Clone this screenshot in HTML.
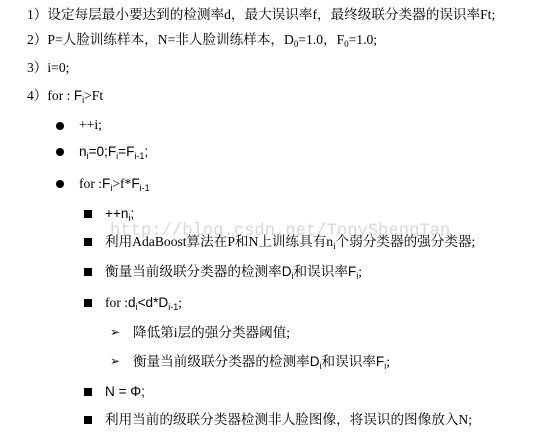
<!DOCTYPE html>
<html><head><meta charset="utf-8"><style>
body{margin:0;width:537px;height:438px;background:#fff;position:relative;overflow:hidden;font-family:"Liberation Serif","Noto Serif CJK SC",serif;font-size:13.6px;color:#000}
.l{position:absolute;white-space:nowrap;line-height:16px}
.s{font-family:"Liberation Sans","Noto Sans CJK SC",sans-serif}
sub{font-size:9px;vertical-align:-3px;line-height:0}
.b{position:absolute;width:8px;height:8px;border-radius:50%;background:#000}
.q{position:absolute;width:8px;height:8px;background:#000}
.a{position:absolute;font-size:12px;font-family:"DejaVu Sans",sans-serif}
.wm{position:absolute;left:110px;top:222px;font-family:"Liberation Mono",monospace;font-size:17.2px;color:#d8d8d8;white-space:nowrap}
</style></head><body>
<div class="wm">http://blog.csdn.net/TonyShengTan</div>
<div class="l" style="left:27px;top:7px">1）设定每层最小要达到的检测率d，最大误识率f，最终级联分类器的误识率Ft;</div>
<div class="l" style="left:27px;top:32px">2）P=人脸训练样本，N=非人脸训练样本，D<sub>0</sub>=1.0，F<sub>0</sub>=1.0;</div>
<div class="l" style="left:27px;top:60px">3）i=0;</div>
<div class="l" style="left:27px;top:88px">4）for : <span class="s">F<sub>i</sub></span>&gt;Ft</div>
<div class="b" style="left:56px;top:122px"></div><div class="l" style="left:79px;top:117px">++i;</div>
<div class="b" style="left:56px;top:148px"></div><div class="l s" style="left:79px;top:144px">n<sub>i</sub>=0;F<sub>i</sub>=F<sub>i-1</sub>;</div>
<div class="b" style="left:56px;top:180px"></div><div class="l" style="left:79px;top:176px">for :<span class="s">F<sub>i</sub></span>&gt;f*<span class="s">F<sub>i-1</sub></span></div>
<div class="q" style="left:84px;top:210px"></div><div class="l s" style="left:105px;top:206px">++n<sub>i</sub>;</div>
<div class="q" style="left:84px;top:238px"></div><div class="l" style="left:105px;top:234px">利用AdaBoost算法在P和N上训练具有n<sub>i</sub>个弱分类器的强分类器;</div>
<div class="q" style="left:84px;top:268px"></div><div class="l" style="left:105px;top:264px">衡量当前级联分类器的检测率<span class="s">D<sub>i</sub></span>和误识率<span class="s">F<sub>i</sub></span>;</div>
<div class="q" style="left:84px;top:299px"></div><div class="l" style="left:105px;top:295px">for :<span class="s">d<sub>i</sub>&lt;d*D<sub>i-1</sub></span>;</div>
<div class="a" style="left:110px;top:325px">➢</div><div class="l" style="left:133px;top:325px">降低第i层的强分类器阈值;</div>
<div class="a" style="left:110px;top:354px">➢</div><div class="l" style="left:133px;top:354px">衡量当前级联分类器的检测率<span class="s">D<sub>i</sub></span>和误识率<span class="s">F<sub>i</sub></span>;</div>
<div class="q" style="left:84px;top:388px"></div><div class="l s" style="left:105px;top:384px">N = Φ;</div>
<div class="q" style="left:84px;top:416px"></div><div class="l" style="left:105px;top:412px">利用当前的级联分类器检测非人脸图像，将误识的图像放入N;</div>
</body></html>
